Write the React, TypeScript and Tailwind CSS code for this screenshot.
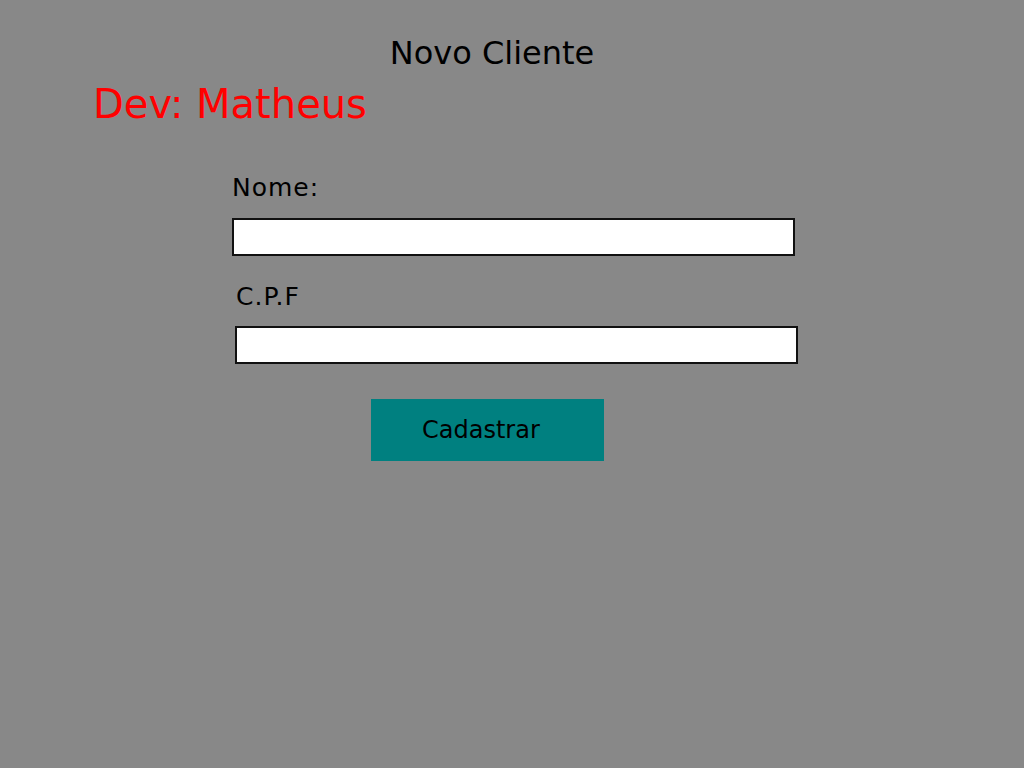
import { useState } from "react";

const App = () => {
  const [nome, setNome] = useState("");
  const [cpf, setCpf] = useState("");

  return (
    <div
      className="min-h-screen w-full bg-[#888888] text-black"
      style={{ fontFamily: '"DejaVu Sans", sans-serif' }}
    >
      <div className="w-[984px] pt-[35px] flex justify-center">
        <h1 className="text-[32px] leading-[37px] font-normal">Novo Cliente</h1>
      </div>

      <h2 className="mt-[9px] ml-[93px] text-[40px] leading-[47px] font-normal text-[#ff0000]">
        Dev: Matheus
      </h2>

      <form className="ml-[232px] mt-[45px] flex flex-col items-start" onSubmit={(e) => e.preventDefault()}>
        <label className="text-[25px] leading-[29px] tracking-[1px]">Nome:</label>
        <input
          value={nome}
          onChange={(e) => setNome(e.target.value)}
          className="mt-[16px] w-[563px] h-[38px] border-2 border-[#111111] bg-white outline-none"
        />

        <label className="mt-[26px] ml-[4px] text-[25px] leading-[29px] tracking-[1px]">C.P.F</label>
        <input
          value={cpf}
          onChange={(e) => setCpf(e.target.value)}
          className="mt-[15px] ml-[3px] w-[563px] h-[38px] border-2 border-[#111111] bg-white outline-none"
        />

        <button
          type="submit"
          className="mt-[35px] ml-[139px] w-[233px] h-[62px] bg-[#008080] text-left pl-[51px] text-[24px] leading-[28px] text-black"
        >
          Cadastrar
        </button>
      </form>
    </div>
  );
};

export default App;
